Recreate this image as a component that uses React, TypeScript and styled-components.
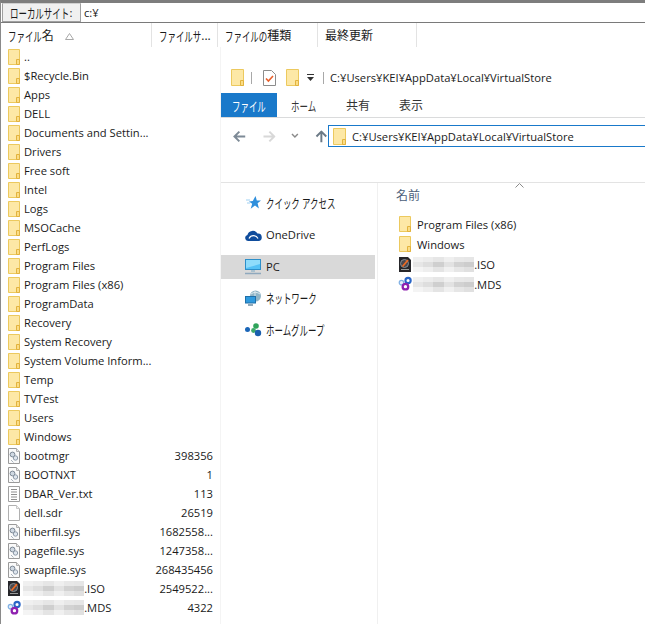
import type { ReactNode } from "react"
import styled, { createGlobalStyle } from "styled-components"

const GlobalStyle = createGlobalStyle`
  html, body {
    margin: 0;
    padding: 0;
    background: #fff;
  }
  body {
    font-family: "Open Sans", "Noto Sans CJK JP", sans-serif;
    font-size: 11.2px;
    color: #1a1a1a;
  }
`

const Page = styled.div`
  width: 645px;
  height: 624px;
  overflow: hidden;
  box-sizing: border-box;
  border-top: 3px solid #7d7d7d;
  border-left: 1px solid #8a8a8a;
  display: flex;
  flex-direction: column;
`

const AddressBar = styled.div`
  height: 19px;
  display: flex;
  align-items: stretch;
  border-bottom: 1px solid #7a7a7a;
  padding: 0 0 0 1px;
`

const SiteButton = styled.div`
  width: 79px;
  box-sizing: border-box;
  background: #f0f0f0;
  border: 1px solid #a0a0a0;
  border-top: 1px solid #d0d0d0;
  display: flex;
  align-items: center;
  justify-content: center;
  white-space: nowrap;
`

const SiteInput = styled.div`
  padding-left: 3px;
  display: flex;
  align-items: center;
`

const HeaderRow = styled.div`
  height: 24px;
  display: flex;
  flex: none;
`

const HeaderCell = styled.div<{ $w: number }>`
  width: ${(p) => p.$w}px;
  box-sizing: border-box;
  padding-left: 7px;
  border-right: 1px solid #e3e3e3;
  display: flex;
  align-items: center;
  white-space: nowrap;
  position: relative;
  font-size: 12px;
`

const SortMark = styled.svg`
  position: absolute;
  left: 64px;
  top: 10px;
`

const KanaBox = styled.span<{ $chars: number }>`
  display: inline-block;
  width: ${(p) => p.$chars * 8.45}px;
  white-space: nowrap;
`

const KanaInner = styled.span`
  display: inline-block;
  font-size: 13px;
  transform: scaleX(0.65);
  transform-origin: 0 50%;
`

const Body = styled.div`
  flex: 1;
  display: flex;
  min-height: 0;
`

const FileList = styled.div`
  width: 220px;
  flex: none;
  border-right: 1px solid #f4f4f4;
  box-sizing: border-box;
`

const Row = styled.div`
  height: 19px;
  display: flex;
  align-items: center;
  padding-left: 6px;
  padding-right: 7px;
  gap: 3px;
`

const IconSlot = styled.div<{ $ml?: number }>`
  width: 14px;
  height: 17px;
  flex: none;
  margin-left: ${(p) => p.$ml ?? 0}px;
  display: flex;
  align-items: center;
  justify-content: center;
`

const FileName = styled.div`
  flex: 1;
  display: flex;
  align-items: center;
  white-space: nowrap;
  min-width: 0;
`

const FileSize = styled.div`
  text-align: right;
  white-space: nowrap;
`

const Mosaic = styled.div`
  display: grid;
  grid-template-columns: repeat(6, 10.2px);
  grid-template-rows: repeat(3, 5px);
  flex: none;
  margin-left: -1px;
`

const MosaicCell = styled.div<{ $tone: string }>`
  background: ${(p) => p.$tone};
`

const Explorer = styled.div`
  flex: 1;
  min-width: 0;
  display: flex;
  flex-direction: column;
  padding-top: 18px;
`

const TitleRow = styled.div`
  height: 25px;
  display: flex;
  align-items: center;
  padding-left: 10px;
  white-space: nowrap;
`

const TitleSep = styled.div<{ $l: number; $r: number }>`
  width: 1px;
  height: 12px;
  background: #a8a8a8;
  margin: 0 ${(p) => p.$r}px 0 ${(p) => p.$l}px;
`

const TabRow = styled.div`
  height: 24px;
  margin-top: 3px;
  display: flex;
  align-items: stretch;
  border-bottom: 1px solid #dadbdc;
  font-size: 12px;
`

const Tab = styled.div<{ $w: number; $active?: boolean }>`
  width: ${(p) => p.$w}px;
  display: flex;
  align-items: center;
  justify-content: center;
  background: ${(p) => (p.$active ? "#1979ca" : "transparent")};
  color: ${(p) => (p.$active ? "#fff" : "#333")};
`

const NavRow = styled.div`
  height: 65px;
  display: flex;
  align-items: flex-start;
  padding-top: 7px;
  box-sizing: border-box;
  border-bottom: 1px solid #e3e3e3;
`

const NavArrows = styled.div`
  width: 107px;
  height: 22px;
  flex: none;
  padding-left: 12px;
  box-sizing: border-box;
  display: flex;
  align-items: center;
  gap: 17px;
`

const ArrowSvg = styled.svg<{ $rotate: number }>`
  transform: rotate(${(p) => p.$rotate}deg);
`

const ChevronSvg = styled.svg`
  margin: 0 -1px;
`

const DropdownSvg = styled.svg`
  margin: 0 8px 0 7px;
`

const PathBox = styled.div`
  flex: 1;
  height: 22px;
  box-sizing: border-box;
  border: 1px solid #1979ca;
  border-right: none;
  display: flex;
  align-items: center;
  padding-left: 4px;
  gap: 6px;
  white-space: nowrap;
`

const Panes = styled.div`
  flex: 1;
  display: flex;
  min-height: 0;
  position: relative;
`

const ScrollChevron = styled.svg`
  position: absolute;
  left: 294px;
  top: 0;
`

const NavPane = styled.div`
  width: 157px;
  box-sizing: border-box;
  flex: none;
  border-right: 1px solid #f0f0f0;
  display: flex;
  flex-direction: column;
  padding-top: 8px;
`

const NavItem = styled.div<{ $selected?: boolean; $mt: number }>`
  height: 24px;
  margin-top: ${(p) => p.$mt}px;
  margin-right: 2px;
  background: ${(p) => (p.$selected ? "#d9d9d9" : "transparent")};
  display: flex;
  align-items: center;
  padding-left: 24px;
  gap: 4px;
  white-space: nowrap;
`

const NavIcon = styled.div`
  width: 17px;
  display: flex;
  align-items: center;
  justify-content: center;
`

const NavLabel = styled.span`
  margin-top: -2px;
`

const ContentPane = styled.div`
  flex: 1;
  padding-left: 18px;
  display: flex;
  flex-direction: column;
`

const ColumnTitle = styled.div`
  height: 24px;
  display: flex;
  align-items: center;
  color: #4c607a;
  margin-bottom: 7px;
  font-size: 12px;
`

const ContentRow = styled.div<{ $gap: number }>`
  height: 20px;
  display: flex;
  align-items: center;
  padding-left: 2px;
  gap: ${(p) => p.$gap}px;
  white-space: nowrap;
`

// kana in the reference are set much narrower than the installed CJK font
const Kana = ({ children }: { children: string }) => (
  <KanaBox $chars={children.length}>
    <KanaInner>{children}</KanaInner>
  </KanaBox>
)

const Folder = ({ w = 13, h = 17 }: { w?: number; h?: number }) => (
  <svg width={w} height={h} viewBox={`0 0 ${w} ${h}`}>
    <path d={`M.5.5h${w - 1}v${h - 1}H.5z`} fill="#fde8a6" stroke="#ecc95e" />
    <path d={`M${w - 3.5} ${h - 0.5}v-5h3v5z`} fill="#fbdd85" stroke="#e2b33e" />
  </svg>
)

const SysFile = () => (
  <svg width="12" height="16" viewBox="0 0 12 16">
    <path d="M.5.5h8l3 3v12H.5z" fill="#fafafa" stroke="#9a9a9a" />
    <path d="M8.500.5v3h3" fill="#e8e8e8" stroke="#b0b0b0" />
    <circle cx="4.500" cy="6.500" r="2.400" fill="#cfd8e2" stroke="#7b8794" />
    <circle cx="7.500" cy="10" r="2.200" fill="#dfe6ee" stroke="#8e9aa8" />
    <path d="M3 12l2.500 2.500" stroke="#a9b3bf" />
  </svg>
)

const TextFile = () => (
  <svg width="12" height="16" viewBox="0 0 12 16">
    <path d="M.5.5h11v15H.5z" fill="#fff" stroke="#a0a0a0" />
    <path d="M3 3.500h6M3 6h6M3 8.500h6M3 11h6M3 13.500h6" stroke="#8f8f8f" />
  </svg>
)

const BlankFile = () => (
  <svg width="12" height="16" viewBox="0 0 12 16">
    <path d="M.5.5h8l3 3v12H.5z" fill="#fff" stroke="#b0b0b0" />
    <path d="M8.500.5v3h3" fill="#f2f2f2" stroke="#c8c8c8" />
  </svg>
)

const IsoIcon = () => (
  <svg width="12" height="15" viewBox="0 0 12 15">
    <path d="M0 0h9l3 3v12H0z" fill="#26262a" />
    <circle cx="5.500" cy="6.500" r="4" fill="#4a4a50" stroke="#8a8f96" />
    <path d="M3.500 9.500L9 3" stroke="#ef6a22" strokeWidth="1.800" />
    <path d="M2 12.500h8" stroke="#9a9a9a" />
  </svg>
)

const MdsIcon = () => (
  <svg width="16" height="16" viewBox="0 0 16 16">
    <circle cx="11.500" cy="4" r="3" fill="none" stroke="#2a66c8" strokeWidth="2.400" />
    <circle cx="4" cy="6.500" r="2.600" fill="#e4eefa" stroke="#7fb0e4" strokeWidth="1.400" />
    <circle cx="8.500" cy="11" r="3.200" fill="none" stroke="#8f22b0" strokeWidth="2.600" />
  </svg>
)

const DocCheck = () => (
  <svg width="13" height="16" viewBox="0 0 13 16">
    <path d="M.5.5h8l4 4v11H.5z" fill="#fff" stroke="#8c8c8c" />
    <path d="M3 8.500l2.400 2.600L10 6" fill="none" stroke="#e8602c" strokeWidth="1.600" />
  </svg>
)

const Dropdown = () => (
  <DropdownSvg width="9" height="8" viewBox="0 0 9 8">
    <path d="M1 .5h7" stroke="#333" />
    <path d="M1 3h7L4.500 7z" fill="#333" />
  </DropdownSvg>
)

const arrowTurn = { left: 0, right: 180, up: 90 }

const Arrow = ({ dir, color }: { dir: "left" | "right" | "up"; color: string }) => (
  <ArrowSvg $rotate={arrowTurn[dir]} width="13" height="13" viewBox="0 0 13 13">
    <path d="M12.500 6.500H2M6.500 1.500l-5 5 5 5" fill="none" stroke={color} strokeWidth="2" />
  </ArrowSvg>
)

const Chevron = () => (
  <ChevronSvg width="8" height="6" viewBox="0 0 8 6">
    <path d="M1 1l3 3 3-3" fill="none" stroke="#8a8a8a" strokeWidth="1.500" />
  </ChevronSvg>
)

const StarIcon = () => (
  <svg width="15" height="14" viewBox="0 0 15 14">
    <path d="M9.500 0l1.300 4.500H15l-3.400 2.800 1.300 5.200L9 9.500 4.700 12.800l1.500-5L3 5.500l3.800-.6z" fill="#2f8fdc" />
    <path d="M0 4h4M1 7h3" stroke="#9fd0f2" />
  </svg>
)

const CloudIcon = () => (
  <svg width="17" height="11" viewBox="0 0 17 11">
    <path d="M3 11a3 3 0 0 1-.6-5.900A5.500 5.500 0 0 1 12.500 3.600 3.700 3.700 0 0 1 13.500 11z" fill="#0f4c9c" />
    <path d="M4 8.500a5 5 0 0 1 9 0" fill="none" stroke="#fff" strokeWidth="1.200" />
  </svg>
)

const MonitorIcon = () => (
  <svg width="17" height="16" viewBox="0 0 17 16">
    <rect x=".5" y=".5" width="15" height="10" fill="#55c1f5" stroke="#2d8fc9" />
    <path d="M1 1h14v4L1 9z" fill="#8fdcfb" />
    <path d="M6 12h4" stroke="#7aa8c4" />
    <path d="M0 14.500h16" stroke="#8fa8bd" strokeWidth="1.500" />
  </svg>
)

const NetworkIcon = () => (
  <svg width="17" height="16" viewBox="0 0 17 16">
    <circle cx="10.500" cy="6" r="5.500" fill="#8fb4c6" />
    <path d="M6 4a7 7 0 0 1 9 0M10 1v10" stroke="#dce9ef" fill="none" />
    <rect x=".5" y="6.500" width="10" height="6.500" fill="#2f9ade" stroke="#1f6fa8" />
    <path d="M3 15h5" stroke="#6c8ca2" strokeWidth="1.500" />
  </svg>
)

const HomegroupIcon = () => (
  <svg width="17" height="14" viewBox="0 0 17 14">
    <circle cx="2.500" cy="6.500" r="2.500" fill="#1a66b8" />
    <circle cx="11" cy="3" r="2.800" fill="#2fa35a" />
    <circle cx="8.500" cy="7.500" r="2.400" fill="#3da96a" />
    <circle cx="13" cy="10" r="3.200" fill="#1a5fae" />
  </svg>
)

const tones = [
  "#f0f0f0", "#ececec", "#e6e6e6", "#efefef", "#e8e8e8", "#e6e6e6",
  "#e6e6e6", "#dedede", "#cfcfcf", "#e2e2e2", "#d2d2d2", "#cdcdcd",
  "#f4f4f4", "#eeeeee", "#e4e4e4", "#f0f0f0", "#e6e6e6", "#e0e0e0",
]

const BlurredName = ({ ext }: { ext: string }) => (
  <FileName>
    <Mosaic>
      {tones.map((t, i) => (
        <MosaicCell key={i} $tone={t} />
      ))}
    </Mosaic>
    {ext}
  </FileName>
)

const folders = [
  "..",
  "$Recycle.Bin",
  "Apps",
  "DELL",
  "Documents and Settin...",
  "Drivers",
  "Free soft",
  "Intel",
  "Logs",
  "MSOCache",
  "PerfLogs",
  "Program Files",
  "Program Files (x86)",
  "ProgramData",
  "Recovery",
  "System Recovery",
  "System Volume Inform...",
  "Temp",
  "TVTest",
  "Users",
  "Windows",
]

const files: { name: string; size: string; icon: ReactNode }[] = [
  { name: "bootmgr", size: "398356", icon: <SysFile /> },
  { name: "BOOTNXT", size: "1", icon: <SysFile /> },
  { name: "DBAR_Ver.txt", size: "113", icon: <TextFile /> },
  { name: "dell.sdr", size: "26519", icon: <BlankFile /> },
  { name: "hiberfil.sys", size: "1682558...", icon: <SysFile /> },
  { name: "pagefile.sys", size: "1247358...", icon: <SysFile /> },
  { name: "swapfile.sys", size: "268435456", icon: <SysFile /> },
]

const virtualStore = "C:¥Users¥KEI¥AppData¥Local¥VirtualStore"

export default function App() {
  return (
    <Page>
      <GlobalStyle />
      <AddressBar>
        <SiteButton>
          <Kana>ローカルサイト</Kana>:
        </SiteButton>
        <SiteInput>c:¥</SiteInput>
      </AddressBar>
      <HeaderRow>
        <HeaderCell $w={151}>
          <Kana>ファイル</Kana>名
          <SortMark width="9" height="7" viewBox="0 0 9 7">
            <path d="M4.500 .5l4 6h-8z" fill="#fff" stroke="#a8a8a8" />
          </SortMark>
        </HeaderCell>
        <HeaderCell $w={66}>
          <Kana>ファイルサ</Kana>...
        </HeaderCell>
        <HeaderCell $w={100}>
          <Kana>ファイルの</Kana>種類
        </HeaderCell>
        <HeaderCell $w={99}>最終更新</HeaderCell>
      </HeaderRow>
      <Body>
        <FileList>
          {folders.map((name) => (
            <Row key={name}>
              <IconSlot>
                <Folder w={12} h={16} />
              </IconSlot>
              <FileName>{name}</FileName>
            </Row>
          ))}
          {files.map((f) => (
            <Row key={f.name}>
              <IconSlot>{f.icon}</IconSlot>
              <FileName>{f.name}</FileName>
              <FileSize>{f.size}</FileSize>
            </Row>
          ))}
          <Row>
            <IconSlot>
              <IsoIcon />
            </IconSlot>
            <BlurredName ext=".ISO" />
            <FileSize>2549522...</FileSize>
          </Row>
          <Row>
            <IconSlot>
              <MdsIcon />
            </IconSlot>
            <BlurredName ext=".MDS" />
            <FileSize>4322</FileSize>
          </Row>
        </FileList>
        <Explorer>
          <TitleRow>
            <Folder />
            <TitleSep $l={7} $r={11} />
            <DocCheck />
            <IconSlot $ml={9}>
              <Folder />
            </IconSlot>
            <Dropdown />
            <TitleSep $l={0} $r={6} />
            {virtualStore}
          </TitleRow>
          <TabRow>
            <Tab $w={56} $active>
              <Kana>ファイル</Kana>
            </Tab>
            <Tab $w={54}>
              <Kana>ホーム</Kana>
            </Tab>
            <Tab $w={54}>共有</Tab>
            <Tab $w={52}>表示</Tab>
          </TabRow>
          <NavRow>
            <NavArrows>
              <Arrow dir="left" color="#7d8a96" />
              <Arrow dir="right" color="#d8d8d8" />
              <Chevron />
              <Arrow dir="up" color="#6c7a86" />
            </NavArrows>
            <PathBox>
              <Folder />
              {virtualStore}
            </PathBox>
          </NavRow>
          <Panes>
            <ScrollChevron width="9" height="5" viewBox="0 0 9 5">
              <path d="M.5 4.500l4-4 4 4" fill="none" stroke="#8a8a8a" />
            </ScrollChevron>
            <NavPane>
              <NavItem $mt={0}>
                <NavIcon>
                  <StarIcon />
                </NavIcon>
                <NavLabel>
                  <Kana>クイック アクセス</Kana>
                </NavLabel>
              </NavItem>
              <NavItem $mt={8}>
                <NavIcon>
                  <CloudIcon />
                </NavIcon>
                <NavLabel>OneDrive</NavLabel>
              </NavItem>
              <NavItem $mt={8} $selected>
                <NavIcon>
                  <MonitorIcon />
                </NavIcon>
                <NavLabel>PC</NavLabel>
              </NavItem>
              <NavItem $mt={7}>
                <NavIcon>
                  <NetworkIcon />
                </NavIcon>
                <NavLabel>
                  <Kana>ネットワーク</Kana>
                </NavLabel>
              </NavItem>
              <NavItem $mt={8}>
                <NavIcon>
                  <HomegroupIcon />
                </NavIcon>
                <NavLabel>
                  <Kana>ホームグループ</Kana>
                </NavLabel>
              </NavItem>
            </NavPane>
            <ContentPane>
              <ColumnTitle>名前</ColumnTitle>
              <ContentRow $gap={5}>
                <IconSlot>
                  <Folder w={12} h={16} />
                </IconSlot>
                Program Files (x86)
              </ContentRow>
              <ContentRow $gap={5}>
                <IconSlot>
                  <Folder w={12} h={16} />
                </IconSlot>
                Windows
              </ContentRow>
              <ContentRow $gap={2}>
                <IconSlot>
                  <IsoIcon />
                </IconSlot>
                <BlurredName ext=".ISO" />
              </ContentRow>
              <ContentRow $gap={2}>
                <IconSlot>
                  <MdsIcon />
                </IconSlot>
                <BlurredName ext=".MDS" />
              </ContentRow>
            </ContentPane>
          </Panes>
        </Explorer>
      </Body>
    </Page>
  )
}
